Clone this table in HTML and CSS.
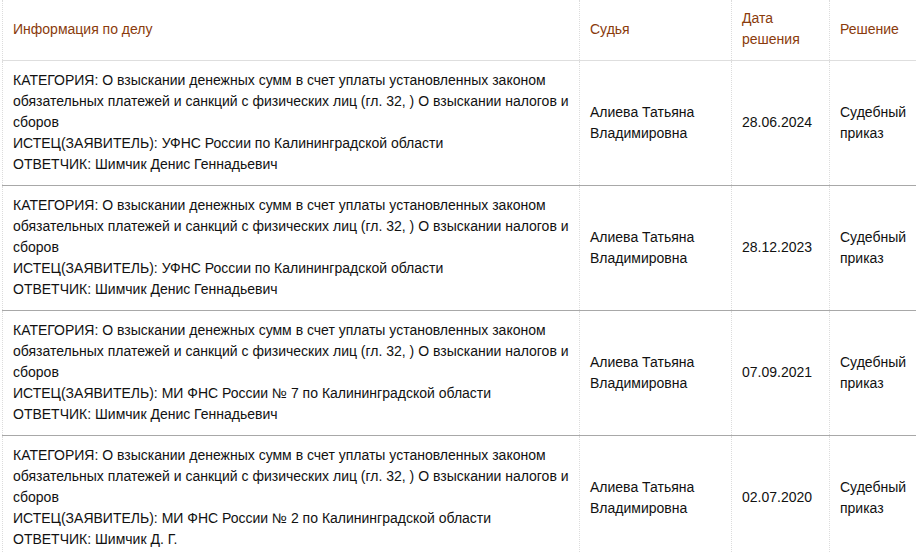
FILE: index.html
```html
<!DOCTYPE html>
<html lang="ru">
<head>
<meta charset="utf-8">
<title>Дела</title>
<link rel="stylesheet" href="styles.css">
</head>
<body>
<div class="wrap">
<table class="cases">
  <colgroup>
    <col class="c-info"><col class="c-judge"><col class="c-date"><col class="c-res">
  </colgroup>
  <thead>
    <tr>
      <th>Информация по делу</th>
      <th>Судья</th>
      <th>Дата решения</th>
      <th>Решение</th>
    </tr>
  </thead>
  <tbody>
    <tr>
      <td>КАТЕГОРИЯ: О взыскании денежных сумм в счет уплаты установленных законом обязательных платежей и санкций с физических лиц (гл. 32, ) О взыскании налогов и сборов<br>ИСТЕЦ(ЗАЯВИТЕЛЬ): УФНС России по Калининградской области<br>ОТВЕТЧИК: Шимчик Денис Геннадьевич</td>
      <td>Алиева Татьяна Владимировна</td>
      <td>28.06.2024</td>
      <td>Судебный приказ</td>
    </tr>
    <tr>
      <td>КАТЕГОРИЯ: О взыскании денежных сумм в счет уплаты установленных законом обязательных платежей и санкций с физических лиц (гл. 32, ) О взыскании налогов и сборов<br>ИСТЕЦ(ЗАЯВИТЕЛЬ): УФНС России по Калининградской области<br>ОТВЕТЧИК: Шимчик Денис Геннадьевич</td>
      <td>Алиева Татьяна Владимировна</td>
      <td>28.12.2023</td>
      <td>Судебный приказ</td>
    </tr>
    <tr>
      <td>КАТЕГОРИЯ: О взыскании денежных сумм в счет уплаты установленных законом обязательных платежей и санкций с физических лиц (гл. 32, ) О взыскании налогов и сборов<br>ИСТЕЦ(ЗАЯВИТЕЛЬ): МИ ФНС России № 7 по Калининградской области<br>ОТВЕТЧИК: Шимчик Денис Геннадьевич</td>
      <td>Алиева Татьяна Владимировна</td>
      <td>07.09.2021</td>
      <td>Судебный приказ</td>
    </tr>
    <tr>
      <td>КАТЕГОРИЯ: О взыскании денежных сумм в счет уплаты установленных законом обязательных платежей и санкций с физических лиц (гл. 32, ) О взыскании налогов и сборов<br>ИСТЕЦ(ЗАЯВИТЕЛЬ): МИ ФНС России № 2 по Калининградской области<br>ОТВЕТЧИК: Шимчик Д. Г.</td>
      <td>Алиева Татьяна Владимировна</td>
      <td>02.07.2020</td>
      <td>Судебный приказ</td>
    </tr>
  </tbody>
</table>
</div>
</body>
</html>
```

FILE: styles.css
```css
html, body {
  margin: 0;
  padding: 0;
  background: #ffffff;
  overflow: hidden;
}
body {
  font-family: "Liberation Sans", Arial, Helvetica, sans-serif;
  font-size: 14px;
  line-height: 21px;
  color: #111111;
}
.wrap {
  padding-left: 2px;
}
.cases {
  border-collapse: collapse;
  table-layout: fixed;
  width: 914px;
}
.c-info { width: 577px; }
.c-judge { width: 152px; }
.c-date { width: 98px; }
.c-res { width: 87px; }
.cases th,
.cases td {
  border-left: 1px dotted #dcdcdc;
  vertical-align: middle;
  text-align: left;
  padding: 9px 10px 10px 10px;
}
.cases th {
  font-weight: normal;
  color: #8a3b0c;
  padding-top: 8px;
  padding-bottom: 10px;
  border-bottom: 1px solid #dedede;
}
.cases td {
  border-bottom: 1px solid #a8a8a8;
}
.cases tbody tr:last-child td {
  border-bottom: none;
}
```
